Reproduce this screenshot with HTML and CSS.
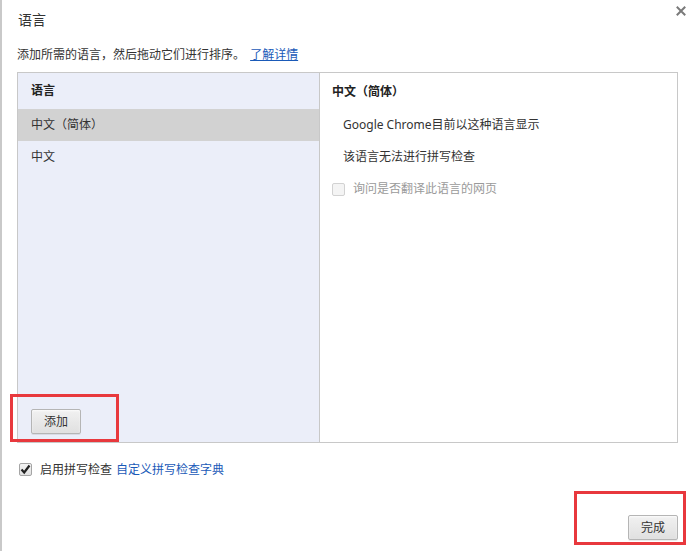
FILE: index.html
```html
<!DOCTYPE html>
<html lang="zh-CN">
<head>
<meta charset="utf-8">
<title>语言</title>
<link rel="stylesheet" href="styles.css">
</head>
<body>
<div class="dialog">
  <div class="close" aria-label="关闭">
    <svg width="10" height="10" viewBox="0 0 10 10"><path d="M1.5 1.5 L8.5 8.5 M8.5 1.5 L1.5 8.5" stroke="#7a7a7a" stroke-width="2" stroke-linecap="square"/></svg>
  </div>
  <h1 class="title">语言</h1>
  <p class="desc">添加所需的语言，然后拖动它们进行排序。 <a class="link underline" href="#">了解详情</a></p>

  <div class="table">
    <div class="left">
      <div class="lhead">语言</div>
      <div class="lrow selected">中文（简体）</div>
      <div class="lrow">中文</div>
      <div class="lfoot"><button class="btn">添加</button></div>
    </div>
    <div class="right">
      <div class="rhead">中文（简体）</div>
      <div class="rrow">Google Chrome目前以这种语言显示</div>
      <div class="rrow">该语言无法进行拼写检查</div>
      <div class="rrow check-row disabled"><span class="cb"></span><span>询问是否翻译此语言的网页</span></div>
    </div>
  </div>

  <div class="spell">
    <span class="cb checked"><svg width="11" height="11" viewBox="0 0 11 11"><path d="M1.5 5.5 L4.2 8.5 L9.5 1.5" fill="none" stroke="#222" stroke-width="2.2"/></svg></span>
    <span class="spell-label">启用拼写检查</span>
    <a class="link" href="#">自定义拼写检查字典</a>
  </div>

  <div class="footer"><button class="btn">完成</button></div>

  <div class="mark mark-add"></div>
  <div class="mark mark-done"></div>
</div>
</body>
</html>
```

FILE: styles.css
```css
* { box-sizing: border-box; }
html, body { margin: 0; padding: 0; background: #fff; }
body {
  font-family: "Noto Sans", "Noto Sans CJK SC", sans-serif;
  font-size: 12px;
  color: #333;
}
.dialog {
  position: relative;
  width: 694px;
  height: 551px;
  border-left: 2px solid #c9c9c9;
  padding: 10px 16px 0 15px;
  display: flex;
  flex-direction: column;
}
.close {
  position: absolute;
  top: 6px;
  right: 8px;
  width: 10px;
  height: 10px;
  line-height: 0;
}
.title {
  margin: 0 0 0 1px;
  font-size: 14px;
  font-weight: normal;
  line-height: 20px;
  color: #333;
}
.desc {
  margin: 16px 0 0 0;
  line-height: 18px;
  color: #333;
}
.link { color: #1a5ab8; text-decoration: none; }
.link.underline { text-decoration: underline; margin-left: 2px; }
.table {
  margin-top: 8px;
  margin-left: 0;
  width: 661px;
  height: 371px;
  border: 1px solid #c8c8c8;
  display: flex;
}
.left {
  width: 302px;
  background: #ebeef9;
  border-right: 1px solid #c8c8c8;
  display: flex;
  flex-direction: column;
}
.lhead, .rhead {
  height: 36px;
  line-height: 36px;
  font-weight: bold;
  color: #222;
}
.lhead { padding-left: 13px; }
.lrow {
  height: 32px;
  line-height: 32px;
  padding-left: 13px;
  color: #333;
}
.lrow.selected { background: #d2d2d2; }
.lfoot {
  margin-top: auto;
  padding: 0 0 8px 13px;
}
.right {
  flex: 1;
  background: #fff;
}
.rhead { padding-left: 12px; line-height: 38px; }
.rrow {
  height: 32px;
  line-height: 32px;
  padding-left: 23px;
  color: #333;
}
.check-row {
  padding-left: 12px;
  display: flex;
  align-items: center;
  gap: 8px;
}
.check-row.disabled { color: #9a9a9a; }
.cb {
  display: inline-flex;
  align-items: center;
  justify-content: center;
  width: 13px;
  height: 13px;
  border: 1px solid #b4b4b4;
  border-radius: 2px;
  background: linear-gradient(#fafafa, #ececec);
  flex: none;
}
.disabled .cb { border-color: #d2d2d2; background: #f4f4f4; }
.cb.checked { border-color: #a5a5a5; background: linear-gradient(#f3f3f3, #e2e2e2); }
.btn {
  font-family: "Noto Sans", "Noto Sans CJK SC", sans-serif;
  font-size: 12px;
  color: #333;
  height: 25px;
  padding: 0 12px;
  line-height: 23px;
  border: 1px solid #b5b5b5;
  border-radius: 2px;
  background: linear-gradient(#f1f1f1, #e0e0e0);
  box-shadow: 0 1px 0 rgba(0,0,0,0.08), inset 0 1px 2px rgba(255,255,255,0.75);
  cursor: default;
}
.spell {
  margin-top: 16px;
  margin-left: 2px;
  height: 20px;
  display: flex;
  align-items: center;
}
.spell-label { margin-left: 8px; margin-right: 4px; color: #333; }
.footer {
  margin-top: 36px;
  display: flex;
  justify-content: flex-end;
}
.mark {
  position: absolute;
  border: 3px solid #e8383d;
}
.mark-add { left: 8px; top: 394px; width: 109px; height: 48px; }
.mark-done { left: 572px; top: 491px; width: 112px; height: 54px; }
```
